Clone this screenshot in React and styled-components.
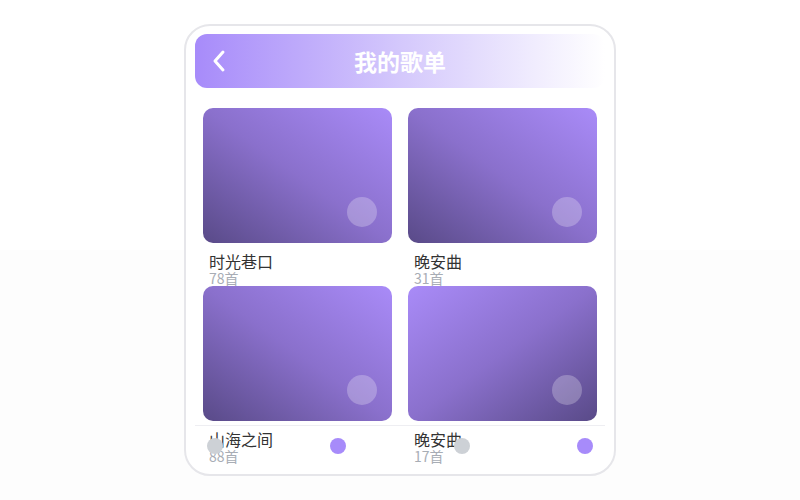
import React from 'react';
import styled, { createGlobalStyle } from 'styled-components';

const GlobalStyle = createGlobalStyle`
  * {
    box-sizing: border-box;
  }
  html, body {
    margin: 0;
    padding: 0;
  }
  body {
    height: 500px;
    background: linear-gradient(180deg, #ffffff 50%, #fdfdfd 50%);
    font-family: "Noto Sans", "Noto Sans CJK SC", sans-serif;
  }
`;

const Page = styled.div`
  height: 500px;
  display: flex;
  align-items: center;
  justify-content: center;
`;

const Phone = styled.div`
  position: relative;
  width: 432px;
  height: 452px;
  padding: 8px 9px;
  background: #ffffff;
  border: 2px solid #e6e6ea;
  border-radius: 26px;
  overflow: hidden;
`;

const Header = styled.div`
  position: relative;
  height: 54px;
  border-radius: 12px;
  background: linear-gradient(90deg, #a78bfa 0%, #d4c8fc 50%, #ffffff 100%);
  display: flex;
  align-items: center;
  justify-content: center;
`;

const BackButton = styled.button`
  position: absolute;
  left: 15px;
  top: 50%;
  transform: translateY(-50%);
  background: none;
  border: none;
  padding: 0;
  display: flex;
  cursor: pointer;
`;

const Title = styled.h1`
  margin: 0;
  color: #ffffff;
  font-size: 23px;
  font-weight: 700;
  line-height: 1;
  font-family: "Noto Sans CJK SC", sans-serif;
`;

const Grid = styled.div`
  margin-top: 20px;
  padding: 0 8px;
  display: grid;
  grid-template-columns: 1fr 1fr;
  column-gap: 16px;
  row-gap: 0;
`;

const Item = styled.div`
  display: flex;
  flex-direction: column;
`;

const Cover = styled.div`
  position: relative;
  height: 135px;
  border-radius: 10px;
  background: linear-gradient(${p => p.$dir}, #a98bf8 0%, #8a70cc 50%, #594a88 100%);
`;

const PlayDot = styled.span`
  position: absolute;
  right: 15px;
  bottom: 16px;
  width: 30px;
  height: 30px;
  border-radius: 50%;
  background: rgba(255, 255, 255, 0.25);
`;

const Name = styled.div`
  margin-top: 8px;
  padding-left: 6px;
  font-family: "Noto Sans CJK SC", sans-serif;
  font-size: 16px;
  font-weight: 400;
  line-height: 20px;
  color: #333333;
`;

const Count = styled.div`
  padding-left: 6px;
  font-family: "Noto Sans CJK SC", sans-serif;
  font-size: 14px;
  line-height: 15px;
  color: #a8adb5;
`;

const Footer = styled.div`
  position: absolute;
  left: 9px;
  right: 9px;
  bottom: 8px;
  height: 41px;
  border-top: 1px solid #eeeef2;
  padding: 0 12px;
  display: flex;
  align-items: center;
  justify-content: space-between;
`;

const Dot = styled.span`
  width: 16px;
  height: 16px;
  border-radius: 50%;
  background: ${p => (p.$active ? '#a78bfa' : '#cdd1d6')};
`;

const playlists = [
  { name: '时光巷口', count: 78, dir: 'to bottom left' },
  { name: '晚安曲', count: 31, dir: 'to bottom left' },
  { name: '山海之间', count: 88, dir: 'to bottom left' },
  { name: '晚安曲', count: 17, dir: 'to bottom right' },
];

const App = () => {
  return (
    <>
      <GlobalStyle />
      <Page>
        <Phone>
          <Header>
            <BackButton aria-label="返回">
              <svg width="18" height="26" viewBox="0 0 18 26" fill="none">
                <path
                  d="M13 4 L5 13 L13 22"
                  stroke="#ffffff"
                  strokeWidth="3"
                  strokeLinecap="round"
                  strokeLinejoin="round"
                />
              </svg>
            </BackButton>
            <Title>我的歌单</Title>
          </Header>

          <Grid>
            {playlists.map((p, i) => (
              <Item key={i}>
                <Cover $dir={p.dir}>
                  <PlayDot />
                </Cover>
                <Name>{p.name}</Name>
                <Count>{p.count}首</Count>
              </Item>
            ))}
          </Grid>

          <Footer>
            <Dot />
            <Dot $active />
            <Dot />
            <Dot $active />
          </Footer>
        </Phone>
      </Page>
    </>
  );
};

export default App;
